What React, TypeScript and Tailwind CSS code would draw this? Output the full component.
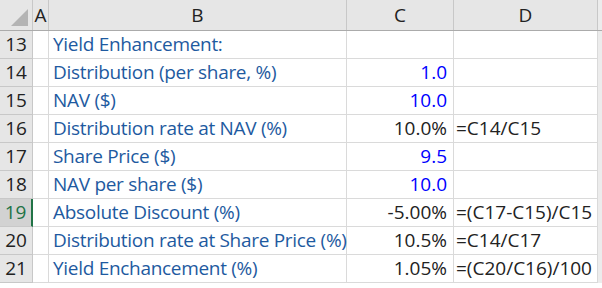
const rows = [
  { n: 13, b: "Yield Enhancement:", c: "", d: "", blue: false },
  { n: 14, b: "Distribution (per share, %)", c: "1.0", d: "", blue: true },
  { n: 15, b: "NAV ($)", c: "10.0", d: "", blue: true },
  { n: 16, b: "Distribution rate at NAV (%)", c: "10.0%", d: "=C14/C15", blue: false },
  { n: 17, b: "Share Price ($)", c: "9.5", d: "", blue: true },
  { n: 18, b: "NAV per share ($)", c: "10.0", d: "", blue: true },
  { n: 19, b: "Absolute Discount (%)", c: "-5.00%", d: "=(C17-C15)/C15", blue: false },
  { n: 20, b: "Distribution rate at Share Price (%)", c: "10.5%", d: "=C14/C17", blue: false },
  { n: 21, b: "Yield Enchancement (%)", c: "1.05%", d: "=(C20/C16)/100", blue: false },
];

const cols = "grid-cols-[33px_16px_298px_107px_144px_4px]";

export default function App() {
  return (
    <div
      className="w-[602px] h-[288px] overflow-hidden bg-white text-[19px] leading-none"
      style={{ fontFamily: '"Open Sans", "Noto Sans", sans-serif' }}
    >
      <div className={`grid ${cols} h-[31px] bg-[#e6e6e6] border-b border-[#ababab] text-[#222]`}>
        <div className="relative border-r border-[#c8c8c8]">
          <div className="absolute right-[4px] bottom-[4px] w-0 h-0 border-l-[17px] border-l-transparent border-b-[17px] border-b-[#b4b4b4]" />
        </div>
        <div className="flex items-center justify-center border-r border-[#c8c8c8]">A</div>
        <div className="flex items-center justify-center border-r border-[#c8c8c8]">B</div>
        <div className="flex items-center justify-center border-r border-[#c8c8c8]">C</div>
        <div className="flex items-center justify-center border-r border-[#c8c8c8]">D</div>
        <div className="bg-[#ececec]" />
      </div>
      {rows.map((r) => {
        const sel = r.n === 19;
        return (
          <div key={r.n} className={`grid ${cols} h-[28px]`}>
            <div
              className={`flex items-center justify-center border-b border-[#c8c8c8] ${
                sel
                  ? "bg-[#d2d2d2] text-[#217346] border-r-2 border-r-[#217346]"
                  : "bg-[#e6e6e6] text-[#222] border-r border-r-[#c8c8c8]"
              }`}
            >
              {r.n}
            </div>
            <div className="border-r border-b border-[#dadada]" />
            <div className="flex items-center pl-[4px] border-r border-b border-[#dadada] text-[#1e5aa0] whitespace-nowrap tracking-[-0.3px]">
              {r.b}
            </div>
            <div
              className={`flex items-center justify-end pr-[6px] border-r border-b border-[#dadada] ${
                r.blue ? "text-[#0000ff]" : "text-[#222]"
              }`}
            >
              {r.c}
            </div>
            <div className="flex items-center pl-[2px] border-r border-b border-[#dadada] text-[#222] whitespace-nowrap">
              {r.d}
            </div>
            <div className="bg-[#ececec]" />
          </div>
        );
      })}
    </div>
  );
}
